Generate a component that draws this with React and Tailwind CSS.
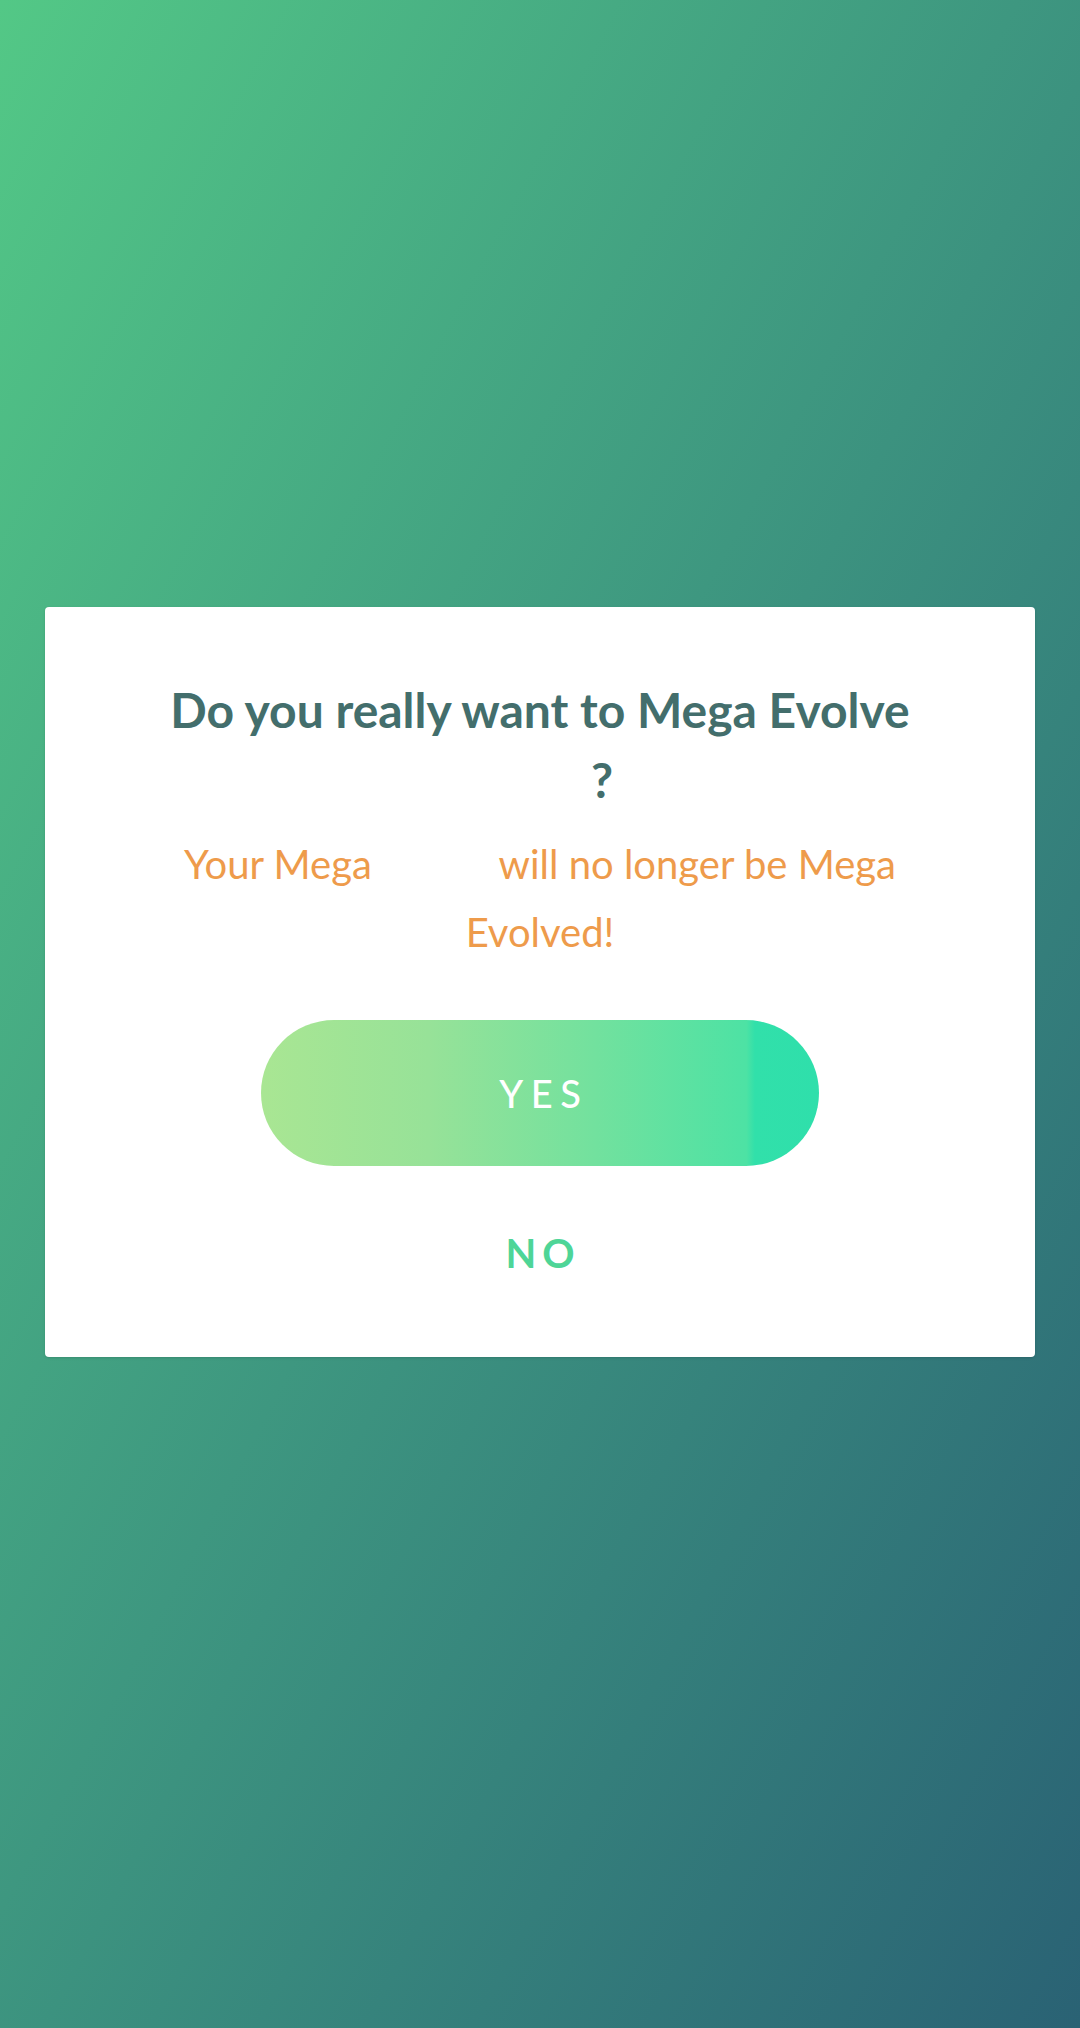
export default function App() {
  return (
    <div
      className="w-[1080px] h-[2028px] flex items-center justify-center pb-[64px] bg-linear-to-br from-[#53c886] to-[#2a6274]"
      style={{ fontFamily: "Lato, 'Open Sans', sans-serif" }}
    >
      {/* Dialog */}
      <div className="w-[990px] bg-white rounded-[4px] shadow-sm flex flex-col items-center pt-[68px] pb-[80px] px-[100px]">
        <h2 className="text-[48px] leading-[70px] font-bold text-[#436e6c] text-center">
          Do you really want to Mega Evolve{" "}
          <span className="inline-block w-[124px]"></span>?
        </h2>

        <p className="mt-[15px] text-[40px] leading-[68px] text-[#ee9b4b] text-center">
          Your Mega <span className="inline-block w-[107px]"></span> will no
          longer be Mega Evolved!
        </p>

        <button className="mt-[54px] w-[558px] h-[146px] rounded-full bg-[linear-gradient(90deg,#a9e693_0%,#97e298_30%,#72e19e_60%,#4de2a4_87%,#31e0aa_88.5%,#2fdfab_100%)] text-white text-[38px] font-medium tracking-[0.2em] pl-[0.2em]">
          YES
        </button>

        <button className="mt-[63px] text-[40px] leading-[48px] font-bold text-[#4ed597] tracking-[0.15em] pl-[0.15em]">
          NO
        </button>
      </div>
    </div>
  );
}
